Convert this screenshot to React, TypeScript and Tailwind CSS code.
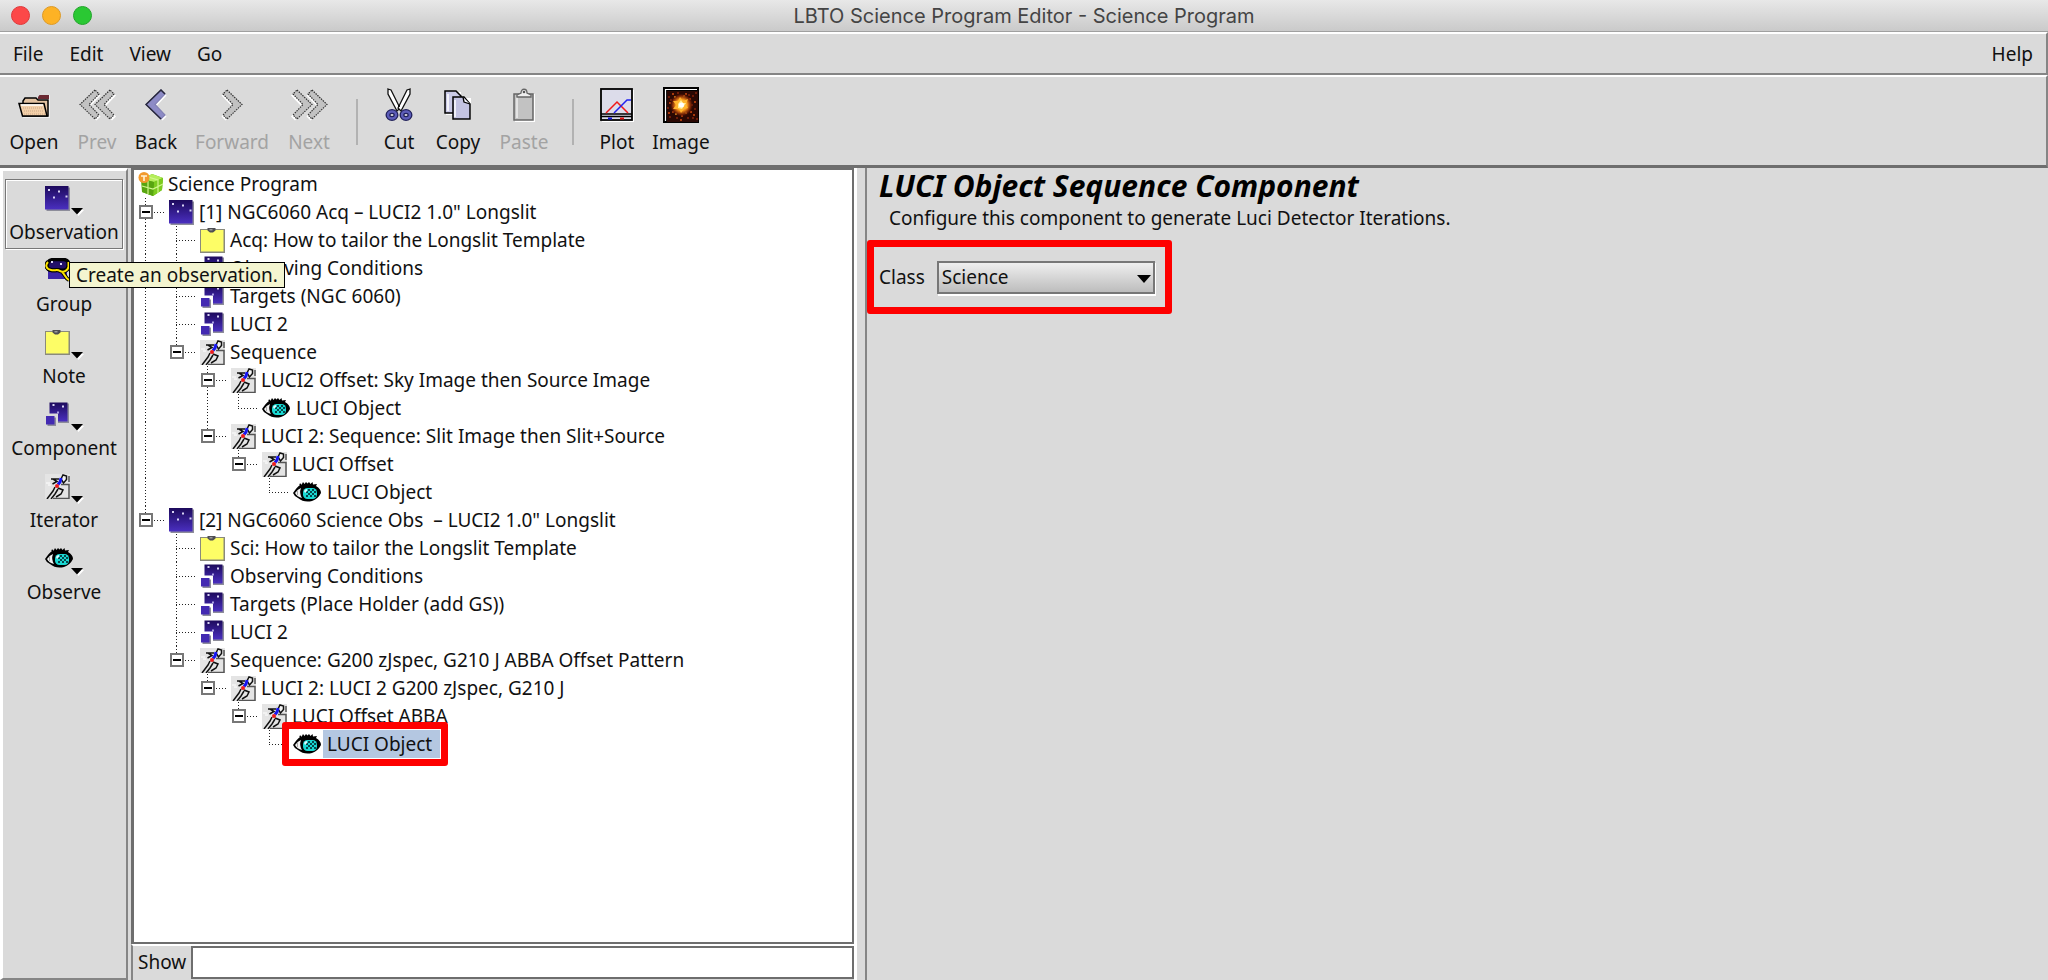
import type { ReactNode } from 'react'

type Kind = 'obs' | 'note' | 'comp' | 'iter' | 'eye'
// guide cells left of a node: blank, passing line, tee, elbow, expander (e: line goes on below, E: last child)
type Guide = ' ' | '|' | 't' | 'l' | 'e' | 'E'

interface Node {
  guides: Guide[]
  kind: Kind
  label: string
  selected?: boolean
}

const nodes: Node[] = [
  { guides: ['e'], kind: 'obs', label: '[1] NGC6060 Acq – LUCI2 1.0" Longslit' },
  { guides: ['|', 't'], kind: 'note', label: 'Acq: How to tailor the Longslit Template' },
  { guides: ['|', 't'], kind: 'comp', label: 'Observing Conditions' },
  { guides: ['|', 't'], kind: 'comp', label: 'Targets (NGC 6060)' },
  { guides: ['|', 't'], kind: 'comp', label: 'LUCI 2' },
  { guides: ['|', 'E'], kind: 'iter', label: 'Sequence' },
  { guides: ['|', ' ', 'e'], kind: 'iter', label: 'LUCI2 Offset: Sky Image then Source Image' },
  { guides: ['|', ' ', '|', 'l'], kind: 'eye', label: 'LUCI Object' },
  { guides: ['|', ' ', 'E'], kind: 'iter', label: 'LUCI 2: Sequence: Slit Image then Slit+Source' },
  { guides: ['|', ' ', ' ', 'E'], kind: 'iter', label: 'LUCI Offset' },
  { guides: ['|', ' ', ' ', ' ', 'l'], kind: 'eye', label: 'LUCI Object' },
  { guides: ['E'], kind: 'obs', label: '[2] NGC6060 Science Obs  – LUCI2 1.0" Longslit' },
  { guides: [' ', 't'], kind: 'note', label: 'Sci: How to tailor the Longslit Template' },
  { guides: [' ', 't'], kind: 'comp', label: 'Observing Conditions' },
  { guides: [' ', 't'], kind: 'comp', label: 'Targets (Place Holder (add GS))' },
  { guides: [' ', 't'], kind: 'comp', label: 'LUCI 2' },
  { guides: [' ', 'E'], kind: 'iter', label: 'Sequence: G200 zJspec, G210 J ABBA Offset Pattern' },
  { guides: [' ', ' ', 'E'], kind: 'iter', label: 'LUCI 2: LUCI 2 G200 zJspec, G210 J' },
  { guides: [' ', ' ', ' ', 'E'], kind: 'iter', label: 'LUCI Offset ABBA' },
  { guides: [' ', ' ', ' ', ' ', 'l'], kind: 'eye', label: 'LUCI Object', selected: true },
]

function NightGradient({ id }: { id: string }) {
  return (
    <defs>
      <linearGradient id={id} x1="0" y1="0" x2="0" y2="1">
        <stop offset="0" stopColor="#1d0a5c" />
        <stop offset="1" stopColor="#4a2fc0" />
      </linearGradient>
    </defs>
  )
}

function ObsIcon() {
  return (
    <svg width="25" height="25" viewBox="0 0 25 25">
      <NightGradient id="nightObs" />
      <rect x="1.500" y="1.500" width="23.500" height="23.500" fill="#8d8d9a" />
      <rect width="23.500" height="23.500" fill="url(#nightObs)" />
      <g fill="#d8d4f4">
        <rect x="3" y="3" width="2" height="2" />
        <rect x="13" y="4.500" width="2" height="2" />
        <rect x="8" y="10.500" width="2" height="2" />
        <rect x="20.500" y="9.500" width="2" height="2" />
      </g>
    </svg>
  )
}

function CompIcon() {
  return (
    <svg width="25" height="25" viewBox="0 0 25 25">
      <NightGradient id="nightComp" />
      <path d="M5.500 1.500H24V21H13V11H5.500z" fill="#8d8d9a" />
      <path d="M4.500 .5H22.500V19.500H13V11.500H4.500z" fill="url(#nightComp)" />
      <rect x="2.500" y="15.500" width="8.500" height="8.500" fill="#8d8d9a" />
      <rect x="1" y="14" width="8.500" height="8.500" fill="#432ab2" />
      <rect x="7.500" y="2" width="2" height="2" fill="#d8d4f4" />
      <rect x="17" y="3.500" width="2" height="2" fill="#d8d4f4" />
      <rect x="12" y="9.500" width="2" height="2" fill="#a89ee0" />
    </svg>
  )
}

function GroupIcon() {
  return (
    <svg width="25" height="25" viewBox="0 0 25 25">
      <rect x="3" y="8" width="19" height="13" fill="#3c25a8" />
      <path d="M2 8C2 4 4 2 8 1.500h11c4 .5 5 3 4.500 6-1 5-5 5-9.500 4.500-6 1-12 1-12-4z" fill="#221068" stroke="#000" strokeWidth="3.500" />
      <path d="M3 4C0 7 1 11 6 12c4 1 6-1 9 1 4 2 8-1 8.500-4V4M17 14c3 2 3 6 7 8" fill="none" stroke="#000" strokeWidth="4" />
      <path d="M3 4C0 7 1 11 6 12c4 1 6-1 9 1 4 2 8-1 8.500-4V4M17 14c3 2 3 6 7 8" fill="none" stroke="#ffe600" strokeWidth="2" />
      <rect x="6" y="3" width="2" height="2" fill="#d8d4f4" />
      <rect x="15" y="5" width="2" height="2" fill="#d8d4f4" />
    </svg>
  )
}

function NoteIcon() {
  return (
    <svg width="25" height="25" viewBox="0 0 25 25">
      <path d="M0 1h25v24H0z" fill="#8a8a7c" />
      <path d="M1 2h22.500v21.500H1z" fill="#fdfd66" />
      <path d="M7.500 0h8v2.500l-2.500 2h-3l-2.500-2z" fill="#4e4e52" />
      <path d="M9.500 1h3v1.500h-3z" fill="#9a9a9a" />
    </svg>
  )
}

function IterIcon() {
  return (
    <svg width="25" height="25" viewBox="0 0 25 25">
      <rect width="25" height="25" fill="#e4e4e4" />
      <path d="M24 2v6M16 10.500h8v14H8" fill="none" stroke="#555" strokeWidth="1.500" />
      <path d="M16 5l2-4 3.500 1v3.500l-3 3.500z" fill="#f4f4f4" stroke="#111" strokeWidth="1.500" />
      <path d="M14 5H6M8 5l4 2.500-4.500 2.500M13 14l5 2-2 4-5 3M10 13l-2 4-6 8M13 15l-3 5-4 5" fill="none" stroke="#111" strokeWidth="1.500" />
      <path d="M16 4l-1 4-2 2.500" fill="none" stroke="#1515f0" strokeWidth="3" />
      <circle cx="12" cy="12" r="2" fill="#ee1c1c" />
      <path d="M1 9h4M3 11h3" stroke="#fff" />
    </svg>
  )
}

function EyeIcon() {
  return (
    <svg width="29" height="21" viewBox="0 0 29 21">
      <path d="M0 11Q4 5 7 3L6 2l2-.5.5 1.500L10 0l1.500 2L13 0l1.500 1.500L16 0l1.500 2 2-2 .5 2.500L24 2l-1 2q5 3 5 7-3 6-9 8-8 2-14-3-4-2-5-5z" fill="#000" />
      <path d="M2 11q3-4 6-5-2 5 1 10-5-1-7-5z" fill="#f2f2f2" />
      <path d="M4.500 9v4" stroke="#aaa" fill="none" />
      <rect x="10" y="6" width="14" height="11" rx="4.500" fill="#19d8d2" />
      <g fill="#06484c">
        <path d="M15 7h2v2h-2zM19 7h2v2h-2zM13 9h2v2h-2zM17 9h2v2h-2zM21 9h2v2h-2zM15 11h2v2h-2zM19 11h2v2h-2zM13 13h2v2h-2zM17 13h2v2h-2zM21 13h2v2h-2z" />
      </g>
      <path d="M11 9q1-2 3-2v2l-2 2z" fill="#dffcff" />
    </svg>
  )
}

function ProgramIcon() {
  return (
    <svg width="26" height="25" viewBox="0 0 26 25">
      <path d="M14 2l11 4-1 12-9 6-11-4L3 8z" fill="#5fae12" />
      <path d="M14 2l11 4-9 4L4 7z" fill="#b5ee5a" />
      <path d="M16 10l9-4-1 12-9 6z" fill="#7ccc1f" />
      <path d="M4 7l12 3-1 14-11-4z" fill="#58a510" />
      <path d="M10 5l10 3v13M4 14l11 3 10-5M10 9v13" fill="none" stroke="#d2f78e" strokeWidth="1.200" />
      <circle cx="6" cy="5.500" r="5.500" fill="#f29a2e" />
      <path d="M3 4h6M6 4v5" stroke="#fff3d6" strokeWidth="1.600" />
    </svg>
  )
}

function NodeIcon({ kind }: { kind: Kind }) {
  if (kind === 'obs') return <ObsIcon />
  if (kind === 'note') return <NoteIcon />
  if (kind === 'comp') return <CompIcon />
  if (kind === 'iter') return <IterIcon />
  return <EyeIcon />
}

const V_DOTS = 'absolute left-[7px] w-px bg-[repeating-linear-gradient(to_bottom,#222_0_1px,transparent_1px_3px)]'
const H_DOTS = 'absolute top-[14px] h-px bg-[repeating-linear-gradient(to_right,#222_0_1px,transparent_1px_3px)]'

function GuideCell({ guide }: { guide: Guide }) {
  const full = guide === '|' || guide === 't' || guide === 'e'
  const half = guide === 'l' || guide === 'E'
  const box = guide === 'e' || guide === 'E'
  return (
    <span className="relative h-7 w-[31px] shrink-0">
      {full && <span className={`${V_DOTS} inset-y-0`} />}
      {half && <span className={`${V_DOTS} top-0 h-[14px]`} />}
      {guide !== ' ' && guide !== '|' && <span className={`${H_DOTS} left-[7px] w-[19px]`} />}
      {box && (
        <button
          aria-label="Collapse"
          className="absolute left-px top-[7px] flex size-[14px] items-center justify-center border-2 border-[#777] bg-white"
        >
          <span className="h-[2px] w-2 bg-black" />
        </button>
      )}
    </span>
  )
}

function TreeRow({ node }: { node: Node }) {
  return (
    <li className="flex h-7 items-center">
      {node.guides.map((g, i) => (
        <GuideCell key={i} guide={g} />
      ))}
      <span className="relative flex h-7 items-center">
        <NodeIcon kind={node.kind} />
        <span
          className={
            node.selected
              ? 'ml-px flex h-7 items-center whitespace-pre bg-[#b4c7e1] pl-1 pr-2'
              : 'ml-[5px] whitespace-pre'
          }
        >
          {node.label}
        </span>
        {node.selected && <span className="absolute -inset-y-2 -left-[11px] -right-2 rounded-[3px] border-[7px] border-[#fe0000]" />}
      </span>
    </li>
  )
}

function Chevrons({ dir, double, active }: { dir: 'left' | 'right'; double?: boolean; active?: boolean }) {
  const d = 'M16 1L1 15.500L16 30L20 26L10 15.500L20 5Z'
  const fill = active ? '#8d8bc6' : '#c2c2c2'
  const stroke = active ? '#26263a' : '#333'
  const flip = dir === 'right' ? `translate(${double ? 37 : 22} 0) scale(-1 1)` : undefined
  return (
    <svg width={double ? 37 : 22} height="32" viewBox={double ? '0 0 37 32' : '0 0 22 32'}>
      <g transform={flip}>
        {double && (
          <>
            <path d={d} transform="translate(17 1.500)" fill="#fff" />
            <path d={d} transform="translate(15 0)" fill={fill} stroke={stroke} strokeWidth="1.200" strokeDasharray="1.500 1" />
          </>
        )}
        <path d={d} transform="translate(1.500 1.500)" fill="#fff" />
        <path d={d} fill={fill} stroke={active ? '#8280b4' : stroke} strokeWidth="1.200" strokeDasharray={active ? undefined : '1.500 1'} />
        {active && <path d="M20 5l-4-4L1 15.500 16 30" fill="none" stroke={stroke} strokeWidth="1.500" />}
      </g>
    </svg>
  )
}

function OpenIcon() {
  return (
    <svg width="32" height="32" viewBox="0 0 32 32">
      <path d="M5 12h2l2-3h11l2-3h10v23H5z" fill="#fff" opacity=".6" />
      <path d="M20 8l1.500-2H31v4H20z" fill="#6b2a33" />
      <path d="M5 27V12l2-3h11l2 2h10v16z" fill="#e3c3a2" stroke="#000" strokeWidth="1.500" />
      <path d="M1 14.500h25l3 12.500H4.500z" fill="#f3cfa8" stroke="#000" strokeWidth="1.500" />
      <path d="M3 16h22" stroke="#fff" strokeWidth="1.500" />
      <path d="M5 19h20M6 22h20M6 25h21" stroke="#c9a98a" strokeDasharray="1 1" />
    </svg>
  )
}

function CutIcon() {
  return (
    <svg width="28" height="34" viewBox="0 0 28 34">
      <path d="M3 1l3 1 9 18-3 3L3 6z" fill="#fff" stroke="#111" strokeWidth="1.300" />
      <path d="M25 1l-3 1-9 18 3 3 9-17z" fill="#fff" stroke="#111" strokeWidth="1.300" />
      <circle cx="14" cy="18" r="1" />
      <ellipse cx="7" cy="27" rx="4" ry="3.500" fill="#ddd" stroke="#20205a" strokeWidth="5" />
      <ellipse cx="21" cy="27" rx="4" ry="3.500" fill="#ddd" stroke="#20205a" strokeWidth="5" />
      <ellipse cx="7" cy="27" rx="4" ry="3.500" fill="none" stroke="#5c5cb8" strokeWidth="2.500" />
      <ellipse cx="21" cy="27" rx="4" ry="3.500" fill="none" stroke="#5c5cb8" strokeWidth="2.500" />
    </svg>
  )
}

function CopyIcon() {
  return (
    <svg width="28" height="32" viewBox="0 0 28 32">
      <path d="M2 3h15v23H2z" fill="#fff" />
      <path d="M1 2h11l5 5v17H1z" fill="#c9c9e6" stroke="#000" strokeWidth="1.500" />
      <path d="M10 9h17v22H10z" fill="#fff" />
      <path d="M9 8h11l6 7v15H9z" fill="#c3c3e2" stroke="#000" strokeWidth="1.500" />
      <path d="M19 8l1 5 6 2" fill="#f4f4ff" stroke="#000" strokeWidth="1.300" />
      <path d="M4 5v17M11 11v17" stroke="#fff" strokeWidth="1.500" />
    </svg>
  )
}

function PasteIcon() {
  return (
    <svg width="22" height="34" viewBox="0 0 22 34">
      <path d="M2 6h20v28H2z" fill="#fff" />
      <path d="M1 6h19v26H1z" fill="#c2c2c2" stroke="#666" strokeWidth="1.500" />
      <path d="M4 9v21" stroke="#eee" strokeWidth="1.500" />
      <path d="M4 7l4-2c0-5 6-5 6 0l4 2v2H4z" fill="#eee" stroke="#666" strokeWidth="1.300" />
      <circle cx="11" cy="4" r="1.300" fill="#555" />
    </svg>
  )
}

function PlotIcon() {
  return (
    <svg width="34" height="34" viewBox="0 0 34 34">
      <rect x="2" y="2" width="32" height="32" fill="#fff" />
      <rect x="1" y="1" width="31" height="31" fill="#dcdcea" stroke="#000" strokeWidth="1.800" />
      <path d="M1 26h31M1 28.500h31" stroke="#000" strokeWidth="1.500" />
      <path d="M6 25L17 14l11 11" fill="none" stroke="#f01818" strokeWidth="1.500" />
      <path d="M14 25L27 12h4" fill="none" stroke="#2222ee" strokeWidth="1.500" />
      <rect x="8" y="29.500" width="4" height="2" fill="#1212d8" />
      <rect x="20" y="29.500" width="4" height="2" fill="#e01212" />
    </svg>
  )
}

const embers = [
  [5, 9, 0], [9, 6, 1], [14, 5, 0], [22, 6, 1], [29, 8, 0], [31, 14, 1], [6, 15, 1], [4, 20, 0], [9, 24, 1], [6, 29, 0],
  [13, 30, 0], [18, 28, 1], [24, 30, 0], [30, 27, 1], [31, 21, 0], [27, 24, 1], [10, 12, 0], [26, 11, 1], [12, 20, 1],
  [22, 25, 2], [9, 18, 0], [28, 17, 0], [12, 26, 2], [20, 8, 2], [5, 25, 1], [33, 31, 0], [17, 32, 1], [32, 5, 0],
  [11, 9, 2], [25, 7, 0], [7, 12, 0], [15, 24, 0], [29, 30, 0], [23, 21, 1],
]

function ImageIcon() {
  return (
    <svg width="36" height="36" viewBox="0 0 36 36">
      <defs>
        <radialGradient id="flare">
          <stop offset="0" stopColor="#fff" />
          <stop offset=".25" stopColor="#ffe25a" />
          <stop offset=".5" stopColor="#f08a18" />
          <stop offset=".8" stopColor="#7c2206" stopOpacity=".8" />
          <stop offset="1" stopColor="#300800" stopOpacity="0" />
        </radialGradient>
      </defs>
      <rect width="36" height="36" />
      <path d="M2.500 34V2.500H34" fill="none" stroke="#fff" strokeWidth="1.200" />
      <rect x="4" y="4" width="31" height="31" fill="#2a0803" />
      {embers.map(([x, y, heat], i) => (
        <rect key={i} x={x} y={y} width="2" height="2" fill={heat === 2 ? '#e0901c' : heat === 1 ? '#a83a0c' : '#6e1c08'} />
      ))}
      <circle cx="18.500" cy="18" r="12" fill="url(#flare)" />
      <path d="M17 10l3 4 5-2-2 5 2 4-4 1-3 4-2-4-6 0 3-4-3-4 5 0z" fill="#ffb52e" />
      <path d="M18 13l2 3 3 0-2 3-2 3-4-1 0-4z" fill="#ffef9a" />
      <circle cx="18.500" cy="18" r="2.500" fill="#fff" />
    </svg>
  )
}

function ToolButton({ label, icon, className, disabled }: { label: string; icon: ReactNode; className: string; disabled?: boolean }) {
  return (
    <button disabled={disabled} className={`flex flex-col items-center disabled:text-[#a3a3a3] ${className}`}>
      <span className="flex h-9 items-center justify-center">{icon}</span>
      <span className="mt-[5px] leading-7">{label}</span>
    </button>
  )
}

function Separator() {
  return <div className="mx-4 mt-3 h-[46px] w-[2px] bg-[#b2b2b2]" />
}

function SideButton({ label, icon, menu = true, active }: { label: string; icon: ReactNode; menu?: boolean; active?: boolean }) {
  return (
    <button
      className={`flex h-[70px] w-[118px] flex-col items-center border ${
        active ? 'border-[#777] shadow-[1px_1px_0_#fff,inset_1px_1px_0_#fff]' : 'border-transparent'
      }`}
    >
      <span className="relative mt-[6px] flex h-6 w-[39px] items-center">
        {icon}
        {menu && (
          <svg width="13" height="8" viewBox="0 0 13 8" className="absolute -bottom-[6px] right-0">
            <path d="M2 2h11L7.500 8z" fill="#fff" />
            <path d="M0 0h12L6 6.500z" fill="#000" />
          </svg>
        )}
      </span>
      <span className="mt-2 leading-7">{label}</span>
    </button>
  )
}

export default function App() {
  return (
    <div className="flex h-screen flex-col overflow-hidden bg-[#dadada] font-['Noto_Sans','Open_Sans',sans-serif] text-[19px] leading-7 text-[#111]">
      <header className="relative flex h-8 shrink-0 items-center justify-center border-b border-[#a0a0a0] bg-linear-to-b from-[#e8e8e8] to-[#cacaca]">
        <div className="absolute left-[11px] flex gap-3">
          <button aria-label="Close" className="size-[19px] rounded-full border border-[#e0383a] bg-[#fc4848]" />
          <button aria-label="Minimize" className="size-[19px] rounded-full border border-[#dd9a26] bg-[#fdb225]" />
          <button aria-label="Zoom" className="size-[19px] rounded-full border border-[#22a52b] bg-[#2ac833]" />
        </div>
        <h1 className="font-['Inter',sans-serif] text-[20px] text-[#444]">LBTO Science Program Editor - Science Program</h1>
      </header>

      <nav className="flex h-[43px] shrink-0 items-center gap-[26px] border-y-2 border-r-2 border-b-[#858585] border-r-[#858585] border-t-white px-[13px]">
        <button>File</button>
        <button>Edit</button>
        <button>View</button>
        <button>Go</button>
        <button className="ml-auto">Help</button>
      </nav>

      <div className="flex h-[93px] shrink-0 border-b-[3px] border-r-2 border-t-2 border-b-[#6e6e6e] border-r-[#858585] border-t-white pt-[10px]">
        <ToolButton label="Open" className="w-[68px]" icon={<OpenIcon />} />
        <ToolButton label="Prev" className="w-[58px]" icon={<Chevrons dir="left" double />} disabled />
        <ToolButton label="Back" className="w-[60px]" icon={<Chevrons dir="left" active />} />
        <ToolButton label="Forward" className="w-[92px]" icon={<Chevrons dir="right" />} disabled />
        <ToolButton label="Next" className="w-[62px]" icon={<Chevrons dir="right" double />} disabled />
        <Separator />
        <ToolButton label="Cut" className="w-[50px]" icon={<CutIcon />} />
        <ToolButton label="Copy" className="w-[68px]" icon={<CopyIcon />} />
        <ToolButton label="Paste" className="w-[64px]" icon={<PasteIcon />} disabled />
        <Separator />
        <ToolButton label="Plot" className="w-[54px]" icon={<PlotIcon />} />
        <ToolButton label="Image" className="w-[74px]" icon={<ImageIcon />} />
      </div>

      <main className="flex min-h-0 flex-1">
        <aside className="relative mr-[3px] flex w-32 shrink-0 flex-col gap-[2px] border-b-2 border-l-[3px] border-r-2 border-t-[3px] border-b-[#858585] border-l-white border-r-[#858585] border-t-white pl-[2px] pt-2">
          <SideButton label="Observation" icon={<ObsIcon />} active />
          <SideButton label="Group" icon={<GroupIcon />} menu={false} />
          <SideButton label="Note" icon={<NoteIcon />} />
          <SideButton label="Component" icon={<CompIcon />} />
          <SideButton label="Iterator" icon={<IterIcon />} />
          <SideButton label="Observe" icon={<EyeIcon />} />
          <div
            role="tooltip"
            className="absolute left-[66px] top-[91px] z-10 h-[26px] whitespace-nowrap border border-black bg-[#f4f5d0] px-[6px] leading-6"
          >
            Create an observation.
          </div>
        </aside>

        <section className="flex w-[726px] shrink-0 flex-col border-r-[3px] border-white">
          <ul className="min-h-0 flex-1 border-b-2 border-l-[3px] border-r-2 border-t-2 border-[#6e6e6e] bg-white pl-1">
            <li className="flex h-7 items-center gap-1">
              <ProgramIcon />
              <span>Science Program</span>
            </li>
            {nodes.map((node, i) => (
              <TreeRow key={i} node={node} />
            ))}
          </ul>
          <div className="flex h-9 shrink-0 border-l-2 border-t-2 border-l-[#858585] border-t-white pb-px">
            <label htmlFor="show" className="px-[5px] leading-8">
              Show
            </label>
            <input id="show" className="min-w-0 flex-1 border-2 border-[#6e6e6e] bg-white px-1 outline-none" />
          </div>
        </section>

        <section className="ml-2 min-w-0 flex-1 border-l-2 border-[#858585]">
          <h2 className="pb-[2px] pl-3 pt-[2px] text-[30px] font-bold italic leading-8 text-black">LUCI Object Sequence Component</h2>
          <p className="pl-[22px]">Configure this component to generate Luci Detector Iterations.</p>
          <div className="mt-2 flex h-[74px] w-[305px] items-center gap-3 rounded-[3px] border-[7px] border-[#fe0000] pl-[5px]">
            <label htmlFor="class">Class</label>
            <div className="relative">
              <select
                id="class"
                className="h-[33px] w-[218px] appearance-none border-2 border-[#777] bg-linear-to-b from-[#efefef] to-[#bdbdbd] pl-[3px] leading-6 shadow-[1px_2px_0_#fff]"
              >
                <option>Science</option>
              </select>
              <svg width="14" height="8" viewBox="0 0 14 8" className="pointer-events-none absolute right-1 top-[14px]">
                <path d="M0 0h14L7 8z" />
              </svg>
            </div>
          </div>
        </section>
      </main>
    </div>
  )
}
